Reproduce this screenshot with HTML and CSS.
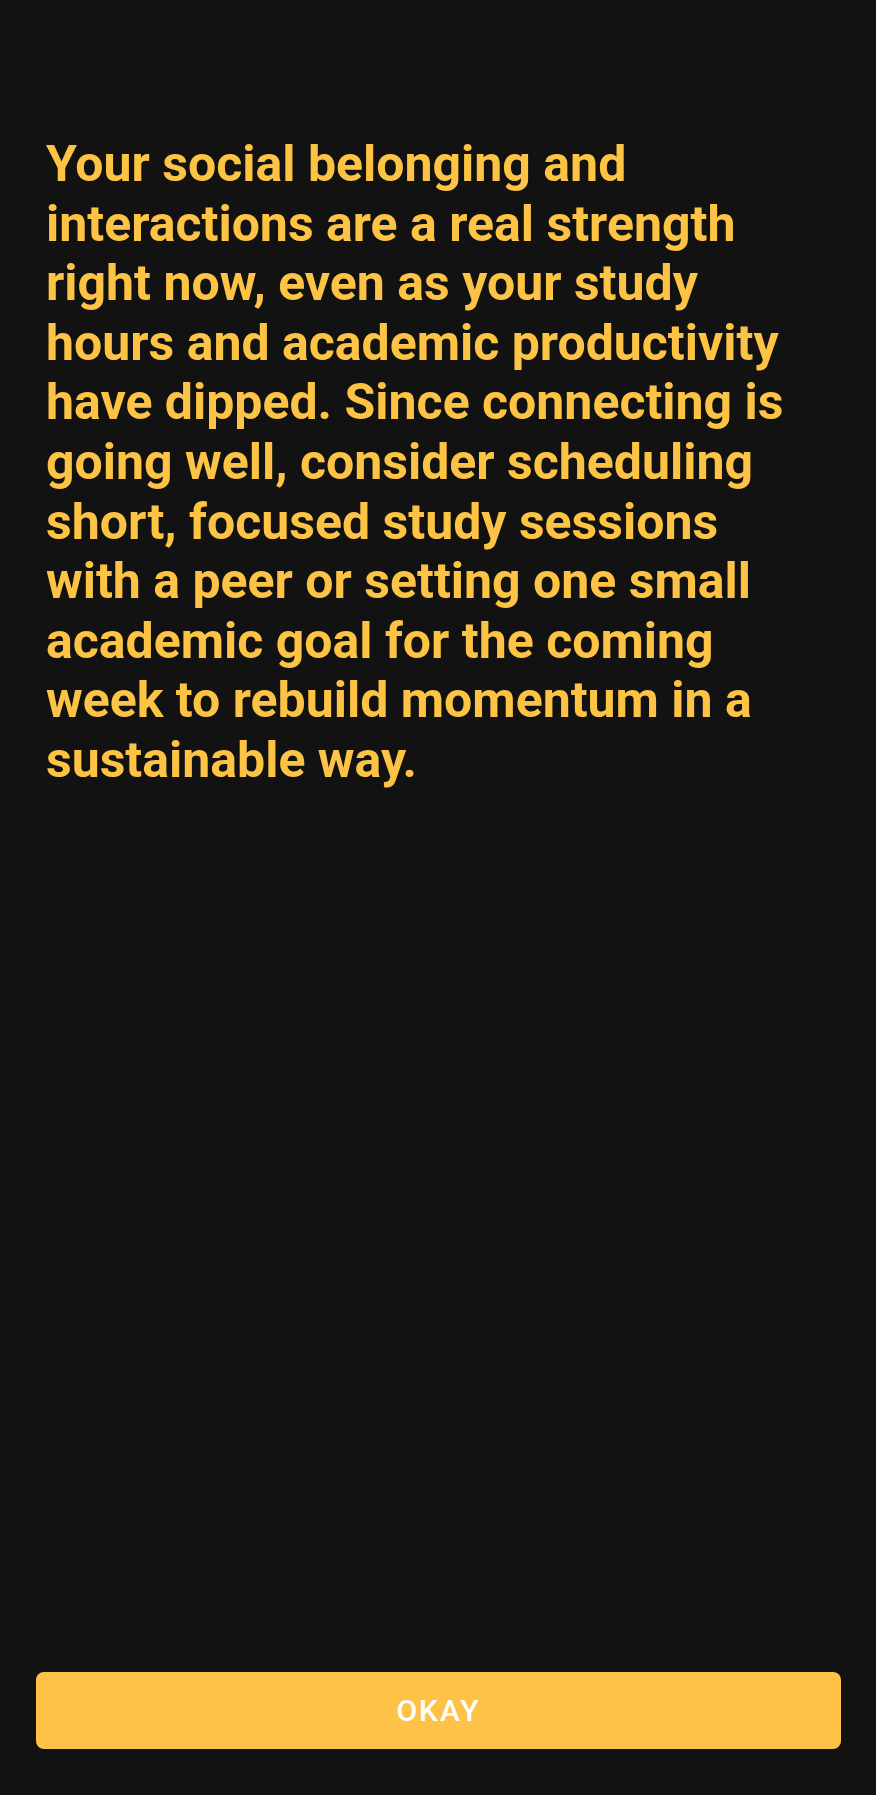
FILE: index.html
```html
<!DOCTYPE html>
<html lang="en">
<head>
<meta charset="utf-8">
<title>Insight</title>
<link rel="stylesheet" href="styles.css">
</head>
<body>
<main class="screen">
  <p class="message">Your social belonging and interactions are a real strength right now, even as your study hours and academic productivity have dipped. Since connecting is going well, consider scheduling short, focused study sessions with a peer or setting one small academic goal for the coming week to rebuild momentum in a sustainable way.</p>
  <div class="actions">
    <button class="okay" type="button">OKAY</button>
  </div>
</main>
</body>
</html>
```
FILE: styles.css
```css
html, body {
  margin: 0;
  padding: 0;
  background: #121212;
}
.screen {
  box-sizing: border-box;
  width: 876px;
  height: 1795px;
  display: flex;
  flex-direction: column;
  justify-content: space-between;
  padding: 135px 35px 46px 36px;
  font-family: Roboto, "Noto Sans", sans-serif;
}
.message {
  margin: 0 36px 0 10px;
  color: #fdc345;
  font-weight: 700;
  font-size: 50px;
  line-height: 59.6px;
}
.actions {
  display: flex;
}
.okay {
  flex: 1;
  height: 77px;
  border: none;
  border-radius: 8px;
  background: #fec246;
  color: #ffffff;
  font-family: Roboto, "Noto Sans", sans-serif;
  font-weight: 500;
  font-size: 30px;
  letter-spacing: 2px;
}
```
